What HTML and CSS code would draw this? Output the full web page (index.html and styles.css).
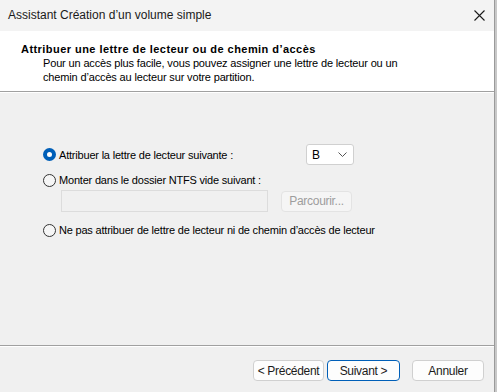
FILE: index.html
```html
<!DOCTYPE html>
<html lang="fr">
<head>
    <meta charset="UTF-8">
    <title>Assistant Création d'un volume simple</title>
    <link rel="stylesheet" href="styles.css">
</head>
<body>

    <div class="window">
        <div class="titlebar">
            <span class="title">Assistant Création d’un volume simple</span>
            <svg class="close" width="11" height="11" viewBox="0 0 11 11">
                <path d="M0.5 0.5 L10.5 10.5 M10.5 0.5 L0.5 10.5" stroke="#1a1a1a" stroke-width="1.1" fill="none"/>
            </svg>
        </div>

        <div class="header">
            <h2>Attribuer une lettre de lecteur ou de chemin d’accès</h2>
            <p>Pour un accès plus facile, vous pouvez assigner une lettre de lecteur ou un<br>chemin d’accès au lecteur sur votre partition.</p>
        </div>

        <div class="content">
            <div class="row row-letter">
                <label class="option">
                    <span class="radio checked"></span>
                    Attribuer la lettre de lecteur suivante :
                </label>
                <div class="combo">
                    <span>B</span>
                    <svg width="9" height="5" viewBox="0 0 9 5">
                        <path d="M0.5 0.5 L4.5 4.5 L8.5 0.5" stroke="#555" stroke-width="1" fill="none"/>
                    </svg>
                </div>
            </div>

            <label class="option row-ntfs">
                <span class="radio"></span>
                Monter dans le dossier NTFS vide suivant :
            </label>

            <div class="row row-path">
                <div class="path-box"></div>
                <button class="browse" disabled>Parcourir...</button>
            </div>

            <label class="option row-none">
                <span class="radio"></span>
                Ne pas attribuer de lettre de lecteur ni de chemin d’accès de lecteur
            </label>
        </div>

        <div class="footer">
            <button class="btn">&lt; Précédent</button>
            <button class="btn primary">Suivant &gt;</button>
            <button class="btn cancel">Annuler</button>
        </div>
    </div>

</body>
</html>
```

FILE: styles.css
```css
* {
    margin: 0;
    padding: 0;
    box-sizing: border-box;
}
body {
    background: #c8c8c8;
    font-family: 'Liberation Sans', Arial, sans-serif;
    font-size: 11px;
    color: #000;
    width: 497px;
    height: 392px;
    overflow: hidden;
}
.window {
    width: 495px;
    height: 392px;
    background: #f0f0f0;
    border-right: 1px solid #9a9a9a;
    display: flex;
    flex-direction: column;
}
.titlebar {
    height: 31px;
    background: #f3f3f3;
    display: flex;
    align-items: center;
    justify-content: space-between;
    padding: 0 8px 1px 8px;
}
.title {
    font-size: 12px;
    color: #1a1a1a;
}
.close {
    margin-right: 1px;
}
.header {
    height: 61px;
    background: #fff;
    border-bottom: 1px solid #a0a0a0;
    box-shadow: 0 1px 0 #fff;
    padding: 11px 0 0 21px;
}
.header h2 {
    font-size: 11px;
    font-weight: bold;
    line-height: 14px;
    letter-spacing: 0.45px;
}
.header p {
    margin-left: 22px;
    line-height: 14px;
    letter-spacing: -0.15px;
}
.content {
    height: 253px;
    padding: 52px 0 0 43px;
    display: flex;
    flex-direction: column;
    letter-spacing: -0.2px;
}
.row {
    display: flex;
    align-items: center;
}
.option {
    display: flex;
    align-items: center;
    gap: 3px;
    height: 14px;
    line-height: 14px;
}
.row-letter .option {
    width: 263px;
}
.radio {
    width: 13px;
    height: 13px;
    border: 1px solid #333;
    border-radius: 50%;
    background: #f6f6f6;
    flex-shrink: 0;
}
.radio.checked {
    border: 4px solid #005fb8;
    background: #fff;
}
.combo {
    width: 48px;
    height: 21px;
    background: #fff;
    border: 1px solid #d0d0d0;
    border-radius: 3px;
    display: flex;
    align-items: center;
    justify-content: space-between;
    padding: 0 6px 0 5px;
    font-size: 12px;
    letter-spacing: 0;
}
.row-ntfs {
    margin-top: 8px;
}
.row-path {
    margin: 3px 0 0 18px;
}
.path-box {
    width: 207px;
    height: 22px;
    border: 1px solid #dcdcdc;
    background: #f0f0f0;
}
.browse {
    margin-left: 13px;
    width: 71px;
    height: 21px;
    border: 1px solid #e3e3e3;
    border-radius: 4px;
    background: #f5f5f5;
    color: #9d9d9d;
    font-family: inherit;
    font-size: 12px;
    letter-spacing: -0.3px;
}
.row-none {
    margin-top: 11px;
}
.footer {
    flex: 1;
    border-top: 1px solid #a0a0a0;
    box-shadow: inset 0 1px 0 #fff;
    display: flex;
    align-items: flex-start;
    padding: 14px 0 0 253px;
}
.btn {
    width: 71px;
    height: 21px;
    border: 1px solid #d0d0d0;
    border-radius: 4px;
    background: #fdfdfd;
    font-family: inherit;
    font-size: 12px;
    letter-spacing: -0.3px;
    color: #1a1a1a;
}
.btn.primary {
    margin-left: 3px;
    width: 73px;
    border-color: #005fb8;
}
.btn.cancel {
    margin-left: 12px;
    width: 72px;
}
```
